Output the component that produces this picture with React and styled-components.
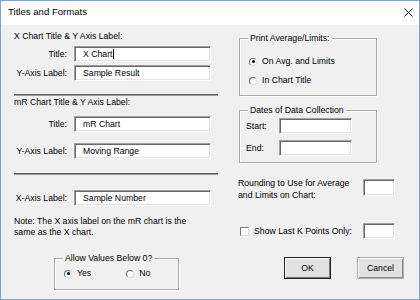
import React from "react";
import styled, { createGlobalStyle, css } from "styled-components";

const GlobalStyle = createGlobalStyle`
  html, body {
    margin: 0;
    padding: 0;
    background: #f0f0f0;
  }
  body {
    font-family: "Liberation Sans", Arial, sans-serif;
  }
`;

const Window = styled.div`
  width: 420px;
  height: 300px;
  box-sizing: border-box;
  border: 1px solid #7ca3d8;
  background: #f0f0f0;
  display: flex;
  flex-direction: column;
  font-size: 8.7px;
  line-height: 11px;
  color: #000;
`;

const TitleBar = styled.div`
  height: 24px;
  flex: none;
  box-sizing: border-box;
  background: #fff;
  display: flex;
  align-items: flex-start;
  justify-content: space-between;
  padding: 5px 6px 0 7px;
  font-size: 9.6px;
  line-height: 12px;
`;

const CloseIcon = styled.svg`
  margin-top: 2px;
`;

const Body = styled.div`
  flex: 1;
  display: flex;
`;

const LeftColumn = styled.div`
  width: 205px;
  padding-left: 13px;
  display: flex;
  flex-direction: column;
`;

const RightColumn = styled.div`
  width: 166px;
  margin-left: 19px;
  display: flex;
  flex-direction: column;
`;

const Heading = styled.div`
  margin-top: ${(p) => p.$top}px;
  white-space: nowrap;
`;

const FieldRow = styled.div`
  display: flex;
  align-items: center;
  gap: 7px;
  height: 16px;
  margin-top: ${(p) => p.$top}px;
`;

const FieldLabel = styled.div`
  width: ${(p) => p.$width || 53}px;
  text-align: ${(p) => p.$align || "right"};
  white-space: nowrap;
  flex: none;
`;

const TextBox = styled.div`
  width: ${(p) => p.$width}px;
  height: ${(p) => p.$height || 16}px;
  margin-top: ${(p) => p.$top || 0}px;
  box-sizing: border-box;
  flex: none;
  background: #fff;
  border: 1px solid;
  border-color: #a0a0a0 #fff #fff #a0a0a0;
  box-shadow: inset 1px 1px 0 #696969, inset -1px -1px 0 #e3e3e3;
  padding-left: 8px;
  display: flex;
  align-items: center;
  white-space: nowrap;
`;

const Caret = styled.span`
  display: inline-block;
  width: 1px;
  height: 10px;
  background: #000;
  margin-left: 1px;
`;

const Divider = styled.div`
  width: 204px;
  height: 2px;
  box-sizing: border-box;
  border-top: 1px solid #5f5f5f;
  border-bottom: 1px solid #9a9a9a;
  margin-top: ${(p) => p.$top}px;
`;

const Note = styled.div`
  margin-top: 10px;
  white-space: nowrap;
`;

const GroupBox = styled.div`
  position: relative;
  box-sizing: border-box;
  width: ${(p) => p.$width}px;
  height: ${(p) => p.$height}px;
  margin-top: ${(p) => p.$top}px;
  margin-left: ${(p) => p.$left || 0}px;
  border: 1px solid #a9a9a9;
  box-shadow: 1px 1px 0 #fff, inset 1px 1px 0 #fff;
  padding: ${(p) => p.$pad || "0"};
  display: flex;
  flex-direction: ${(p) => (p.$row ? "row" : "column")};
`;

const Legend = styled.span`
  position: absolute;
  top: -6px;
  left: 8px;
  padding: 0 2px;
  background: #f0f0f0;
  white-space: nowrap;
`;

const Option = styled.div`
  display: flex;
  align-items: center;
  height: 11px;
  margin-top: ${(p) => p.$top || 0}px;
  margin-left: ${(p) => p.$left || 0}px;
  gap: 5px;
  white-space: nowrap;
`;

const Radio = styled.span`
  position: relative;
  flex: none;
  width: 8px;
  height: 8px;
  box-sizing: border-box;
  border-radius: 50%;
  background: #fff;
  border: 1px solid;
  border-color: #6d6d6d #dcdcdc #dcdcdc #6d6d6d;
  ${(p) =>
    p.$checked &&
    css`
      &::after {
        content: "";
        position: absolute;
        left: 1.5px;
        top: 1.5px;
        width: 3px;
        height: 3px;
        border-radius: 50%;
        background: #000;
      }
    `}
`;

const CheckBox = styled.span`
  flex: none;
  width: 9px;
  height: 9px;
  box-sizing: border-box;
  background: #fff;
  border: 1px solid;
  border-color: #7a7a7a #dcdcdc #dcdcdc #7a7a7a;
`;

const RoundingRow = styled.div`
  display: flex;
  align-items: flex-start;
  justify-content: space-between;
  margin-top: 14px;
  width: 157px;
`;

const RoundingText = styled.div`
  line-height: 12px;
  white-space: nowrap;
`;

const CheckRow = styled.div`
  display: flex;
  align-items: center;
  justify-content: space-between;
  margin-top: 22px;
  margin-left: 2px;
  width: 155px;
  height: 16px;
`;

const ButtonRow = styled.div`
  display: flex;
  gap: 26px;
  padding-left: 46px;
  margin-top: 18px;
`;

const Button = styled.div`
  width: 47px;
  height: 22px;
  box-sizing: border-box;
  display: flex;
  align-items: center;
  justify-content: center;
  background: #e1e1e1;
  border: 1px solid ${(p) => (p.$default ? "#222" : "#adadad")};
  box-shadow: ${(p) =>
    p.$default
      ? "inset 1px 1px 0 #fff, inset -1px -1px 0 #777"
      : "inset 1px 1px 0 #fff, inset -1px -1px 0 #8a8a8a"};
`;

export default function App() {
  return (
    <>
      <GlobalStyle />
      <Window>
        <TitleBar>
          <span>Titles and Formats</span>
          <CloseIcon width="9" height="9" viewBox="0 0 9 9">
            <path d="M0.5 0.5 L8.5 8.5 M8.5 0.5 L0.5 8.5" stroke="#222" strokeWidth="1" />
          </CloseIcon>
        </TitleBar>
        <Body>
          <LeftColumn>
            <Heading $top={6}>X Chart Title &amp; Y Axis Label:</Heading>
            <FieldRow $top={4}>
              <FieldLabel>Title:</FieldLabel>
              <TextBox $width={137}>
                X Chart<Caret />
              </TextBox>
            </FieldRow>
            <FieldRow $top={3}>
              <FieldLabel>Y-Axis Label:</FieldLabel>
              <TextBox $width={137}>Sample Result</TextBox>
            </FieldRow>
            <Divider $top={13} />
            <Heading $top={1}>mR Chart Title &amp; Y Axis Label:</Heading>
            <FieldRow $top={8}>
              <FieldLabel>Title:</FieldLabel>
              <TextBox $width={137}>mR Chart</TextBox>
            </FieldRow>
            <FieldRow $top={11}>
              <FieldLabel>Y-Axis Label:</FieldLabel>
              <TextBox $width={137}>Moving Range</TextBox>
            </FieldRow>
            <Divider $top={14} />
            <FieldRow $top={15}>
              <FieldLabel>X-Axis Label:</FieldLabel>
              <TextBox $width={137}>Sample Number</TextBox>
            </FieldRow>
            <Note>
              Note: The X axis label on the mR chart is the
              <br />
              same as the X chart.
            </Note>
            <GroupBox $width={125} $height={32} $top={20} $left={40} $row $pad="9px 0 0 9px">
              <Legend>Allow Values Below 0?</Legend>
              <Option>
                <Radio $checked />
                Yes
              </Option>
              <Option $left={35}>
                <Radio />
                No
              </Option>
            </GroupBox>
          </LeftColumn>
          <RightColumn>
            <GroupBox $width={138} $height={58} $top={13} $left={1} $pad="17px 0 0 9px">
              <Legend>Print Average/Limits:</Legend>
              <Option>
                <Radio $checked />
                On Avg. and Limits
              </Option>
              <Option $top={8}>
                <Radio />
                In Chart Title
              </Option>
            </GroupBox>
            <GroupBox $width={138} $height={53} $top={14} $left={1} $pad="7px 0 0 6px">
              <Legend>Dates of Data Collection</Legend>
              <FieldRow $top={0}>
                <FieldLabel $width={26} $align="left">Start:</FieldLabel>
                <TextBox $width={73} />
              </FieldRow>
              <FieldRow $top={6}>
                <FieldLabel $width={26} $align="left">End:</FieldLabel>
                <TextBox $width={73} />
              </FieldRow>
            </GroupBox>
            <RoundingRow>
              <RoundingText>
                Rounding to Use for Average
                <br />
                and Limits on Chart:
              </RoundingText>
              <TextBox $width={32} $height={17} $top={2} />
            </RoundingRow>
            <CheckRow>
              <Option>
                <CheckBox />
                Show Last K Points Only:
              </Option>
              <TextBox $width={32} />
            </CheckRow>
            <ButtonRow>
              <Button $default>OK</Button>
              <Button>Cancel</Button>
            </ButtonRow>
          </RightColumn>
        </Body>
      </Window>
    </>
  );
}
